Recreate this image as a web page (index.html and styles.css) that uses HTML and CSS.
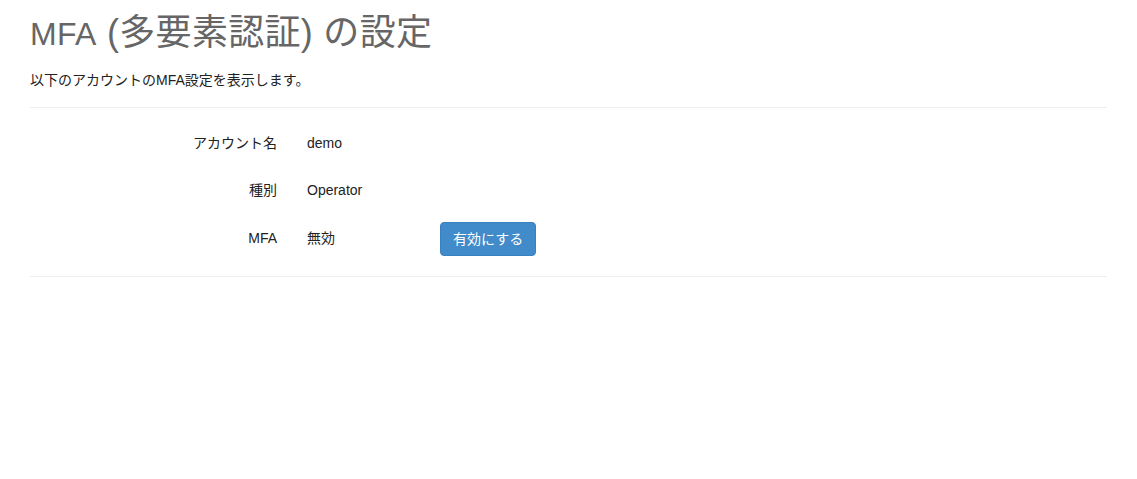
FILE: index.html
```
<!DOCTYPE html>
<html lang="ja">
<head>
<meta charset="utf-8">
<title>MFA (多要素認証) の設定</title>
<link rel="stylesheet" href="styles.css">
</head>
<body>
<div class="page">
  <h1 class="title"><span class="title-latin">MFA</span> (多要素認証) の設定</h1>
  <p class="intro">以下のアカウントのMFA設定を表示します。</p>
  <hr class="sep sep-top">
  <div class="form">
    <div class="form-row">
      <div class="form-label">アカウント名</div>
      <div class="form-value">demo</div>
    </div>
    <div class="form-row">
      <div class="form-label">種別</div>
      <div class="form-value">Operator</div>
    </div>
    <div class="form-row">
      <div class="form-label">MFA</div>
      <div class="form-value">無効</div>
      <button class="btn-primary" type="button">有効にする</button>
    </div>
  </div>
  <hr class="sep sep-bottom">
</div>
</body>
</html>
```
FILE: styles.css
```
html, body {
  margin: 0;
  padding: 0;
  background: #fff;
}

body {
  font-family: "Liberation Sans", "Noto Sans CJK JP", sans-serif;
  font-size: 14px;
  line-height: 20px;
  color: #333;
}

.page {
  padding: 0 30px;
}

.title {
  margin: 13px 0 16px;
  font-size: 36px;
  line-height: 40px;
  font-weight: normal;
  color: #666;
  letter-spacing: 0.3px;
}

.title-latin {
  font-size: 32px;
}

.intro {
  margin: 0;
  color: #222;
}

.sep {
  border: 0;
  border-top: 1px solid #eee;
  margin: 0;
  height: 0;
}

.sep-top {
  margin-top: 17px;
}

.form {
  display: flex;
  flex-direction: column;
  gap: 13px;
  padding-top: 18px;
  padding-bottom: 22px;
}

.form-row {
  display: grid;
  grid-template-columns: 247px 103px auto;
  column-gap: 30px;
  align-items: center;
  height: 34px;
  color: #222;
}

.form-label {
  text-align: right;
}

.btn-primary {
  justify-self: start;
  margin-top: 2px;
  height: 34px;
  padding: 6px 12px;
  font-family: inherit;
  font-size: 14px;
  line-height: 20px;
  color: #fff;
  background: #428bca;
  border: 1px solid #3a80bd;
  border-radius: 4px;
  cursor: pointer;
}
```
